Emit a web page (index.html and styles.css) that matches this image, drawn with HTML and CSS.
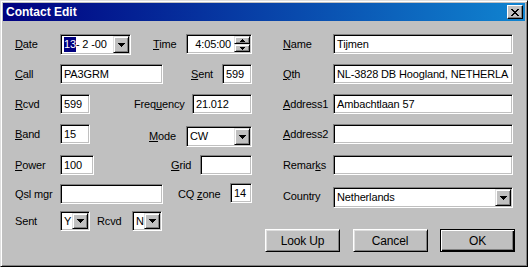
FILE: index.html
```html
<!DOCTYPE html>
<html>
<head>
<meta charset="utf-8">
<link rel="stylesheet" href="styles.css">
</head>
<body>
<div class="window">
  <div class="titlebar">
    <span class="title">Contact Edit</span>
    <span class="close"><svg width="8" height="7" viewBox="0 0 8 7" shape-rendering="crispEdges"><path d="M0 0h2v1h1v1h2V1h1V0h2v1H7v1H6v1H5v1h1v1h1v1h1v1H6V6H5V5H3v1H2v1H0V6h1V5h1V4h1V3H2V2H1V1H0z" fill="#000"/></svg></span>
  </div>
  <div class="content">
    <div class="left">
      <div class="row">
        <span class="lbl"><u>D</u>ate</span>
        <div class="combo w-date"><span class="val"><span class="sel">13</span>- 2 -00</span><span class="drop"><svg class="arr" width="7" height="4" shape-rendering="crispEdges"><path d="M0 0h7v1H6v1H5v1H4v1H3V3H2V2H1V1H0z"/></svg></span></div>
        <span class="lbl2 m-time"><u>T</u>ime</span>
        <div class="edit spin w-time push"><span class="val rt">4:05:00</span><span class="spinbtns"><span class="sb"><svg width="5" height="3" shape-rendering="crispEdges"><path d="M2 0h1v1h1v1h1v1H0V2h1V1h1z"/></svg></span><span class="sb"><svg width="5" height="3" shape-rendering="crispEdges"><path d="M0 0h5v1H4v1H3v1H2V2H1V1H0z"/></svg></span></span></div>
      </div>
      <div class="row">
        <span class="lbl"><u>C</u>all</span>
        <div class="edit w-call">PA3GRM</div>
        <span class="lbl2 m-sent"><u>S</u>ent</span>
        <div class="edit w-3 push">599</div>
      </div>
      <div class="row">
        <span class="lbl"><u>R</u>cvd</span>
        <div class="edit w-3">599</div>
        <span class="lbl2 m-freq">Freq<u>u</u>ency</span>
        <div class="edit w-freq push">21.012</div>
      </div>
      <div class="row h31">
        <span class="lbl"><u>B</u>and</span>
        <div class="edit w-3">15</div>
        <span class="lbl2 m-mode down2"><u>M</u>ode</span>
        <div class="combo w-mode push down2"><span class="val">CW</span><span class="drop"><svg class="arr" width="7" height="4" shape-rendering="crispEdges"><path d="M0 0h7v1H6v1H5v1H4v1H3V3H2V2H1V1H0z"/></svg></span></div>
      </div>
      <div class="row h29">
        <span class="lbl"><u>P</u>ower</span>
        <div class="edit w-pow">100</div>
        <span class="lbl2 m-grid"><u>G</u>rid</span>
        <div class="edit w-grid push"></div>
      </div>
      <div class="row h27">
        <span class="lbl">Qsl mgr</span>
        <div class="edit w-call"></div>
        <span class="lbl2 m-cq">CQ <u>z</u>one</span>
        <div class="edit w-cq push up1">14</div>
      </div>
      <div class="row">
        <span class="lbl">Sent</span>
        <div class="combo w-yn"><span class="val">Y</span><span class="drop"><svg class="arr" width="7" height="4" shape-rendering="crispEdges"><path d="M0 0h7v1H6v1H5v1H4v1H3V3H2V2H1V1H0z"/></svg></span></div>
        <span class="lbl2 m-rcvd">Rcvd</span>
        <div class="combo w-yn"><span class="val">N</span><span class="drop"><svg class="arr" width="7" height="4" shape-rendering="crispEdges"><path d="M0 0h7v1H6v1H5v1H4v1H3V3H2V2H1V1H0z"/></svg></span></div>
      </div>
    </div>
    <div class="right">
      <div class="row">
        <span class="rlbl"><u>N</u>ame</span>
        <div class="edit w-wide">Tijmen</div>
      </div>
      <div class="row">
        <span class="rlbl"><u>Q</u>th</span>
        <div class="edit w-wide">NL-3828 DB Hoogland, NETHERLA</div>
      </div>
      <div class="row">
        <span class="rlbl"><u>A</u>ddress1</span>
        <div class="edit w-wide">Ambachtlaan 57</div>
      </div>
      <div class="row h31">
        <span class="rlbl"><u>A</u>ddress2</span>
        <div class="edit w-wide"></div>
      </div>
      <div class="row h32">
        <span class="rlbl">Remar<u>k</u>s</span>
        <div class="edit w-wide"></div>
      </div>
      <div class="row hc">
        <span class="rlbl up">Country</span>
        <div class="combo w-wide"><span class="val">Netherlands</span><span class="drop"><svg class="arr" width="7" height="4" shape-rendering="crispEdges"><path d="M0 0h7v1H6v1H5v1H4v1H3V3H2V2H1V1H0z"/></svg></span></div>
      </div>
      <div class="buttons">
        <div class="btn">Look Up</div>
        <div class="btn">Cancel</div>
        <div class="btn default">OK</div>
      </div>
    </div>
  </div>
</div>
</body>
</html>
```
FILE: styles.css
```css
* { box-sizing: border-box; }
body {
  margin: 0;
  background: #c0c0c0;
  font-family: "Liberation Sans", Arial, sans-serif;
  font-size: 11px;
  color: #000;
}
u { text-decoration: underline; text-underline-offset: 1px; }
.window {
  width: 528px;
  height: 267px;
  background: #c0c0c0;
  border: 1px solid;
  border-color: #dfdfdf #000 #000 #dfdfdf;
  box-shadow: inset 1px 1px #fff, inset -1px -1px #808080;
  padding: 2px;
}
.titlebar {
  height: 18px;
  background: linear-gradient(to right, #000080, #1084d0);
  display: flex;
  align-items: center;
  justify-content: space-between;
  padding: 0 2px 0 3px;
}
.title {
  color: #fff;
  font-weight: bold;
  font-size: 12px;
}
.close {
  width: 16px;
  height: 14px;
  background: #c0c0c0;
  border: 1px solid;
  border-color: #fff #000 #000 #fff;
  box-shadow: inset -1px -1px #808080;
  display: flex;
  align-items: center;
  justify-content: center;
  padding-right: 1px;
}
.close svg { display: block; }
.content {
  display: flex;
  gap: 13px;
  padding: 13px 0 0 12px;
  letter-spacing: -0.15px;
}
.left { width: 237px; flex: none; }
.right { width: 250px; flex: none; }
.row {
  display: flex;
  align-items: flex-start;
  height: 30px;
}
.row.h31 { height: 31px; }
.row.h29 { height: 29px; }
.row.h27 { height: 27px; }
.row.h32 { height: 32px; }
.row.hc { height: 42px; }
.lbl { width: 45px; flex: none; line-height: 20px; white-space: nowrap; }
.lbl2 { line-height: 20px; white-space: nowrap; }
.rlbl { width: 68px; flex: none; padding-left: 18px; line-height: 20px; white-space: nowrap; }
.rlbl.up { line-height: 18px; }
.m-time { margin-left: 22px; }
.m-sent { margin-left: 28px; }
.m-freq { margin-left: 44px; }
.m-mode { margin-left: 59px; }
.m-grid { margin-left: 77px; }
.m-cq { margin-left: 15px; }
.m-rcvd { margin-left: 7px; width: 35px; }
.push { margin-left: auto; }
.down2 { margin-top: 2px; }
.up1 { margin-top: -1px; }

.edit, .combo {
  height: 20px;
  border: 1px solid;
  border-color: #808080 #fff #fff #808080;
  box-shadow: inset 1px 1px #000, inset -1px -1px #c0c0c0;
  background: #fff;
  white-space: nowrap;
  overflow: hidden;
  flex: none;
}
.edit { padding: 0 3px; line-height: 18px; }
.combo {
  height: 21px;
  display: flex;
  padding: 1px;
}
.combo .val { flex: 1; padding-left: 2px; line-height: 17px; overflow: hidden; }
.combo .sel { background: #000080; color: #fff; display: inline-block; line-height: 15px; margin-top: 1px; }
.edit.spin { display: flex; padding: 1px; }
.edit.spin .val { flex: 1; line-height: 16px; }
.rt { text-align: right; padding-right: 3px; }
.drop, .sb {
  background: #c0c0c0;
  border: 1px solid;
  border-color: #dfdfdf #000 #000 #dfdfdf;
  box-shadow: inset 1px 1px #fff, inset -1px -1px #808080;
  display: flex;
  align-items: center;
  justify-content: center;
}
.drop { width: 16px; height: 17px; flex: none; }
.drop svg, .sb svg { display: block; }
.spinbtns { width: 16px; display: flex; flex-direction: column; flex: none; }
.sb { height: 8px; flex: none; }

.w-date { width: 71px; }
.w-time { width: 66px; }
.w-call { width: 103px; }
.w-3 { width: 30px; }
.w-freq { width: 60px; }
.w-mode { width: 66px; }
.w-pow { width: 34px; }
.w-grid { width: 52px; }
.w-cq { width: 22px; }
.w-yn { width: 30px; height: 20px; }
.w-yn .drop { height: 16px; }
.w-wide { width: 180px; }

.buttons {
  display: flex;
  justify-content: space-between;
}
.btn {
  width: 75px;
  height: 23px;
  background: #c0c0c0;
  border: 1px solid;
  border-color: #fff #000 #000 #fff;
  box-shadow: inset 1px 1px #dfdfdf, inset -1px -1px #808080;
  display: flex;
  align-items: center;
  justify-content: center;
  font-size: 12px;
}
.btn.default {
  border-color: #000;
  box-shadow: inset 1px 1px #fff, inset -1px -1px #000, inset -2px -2px #808080;
}
```
